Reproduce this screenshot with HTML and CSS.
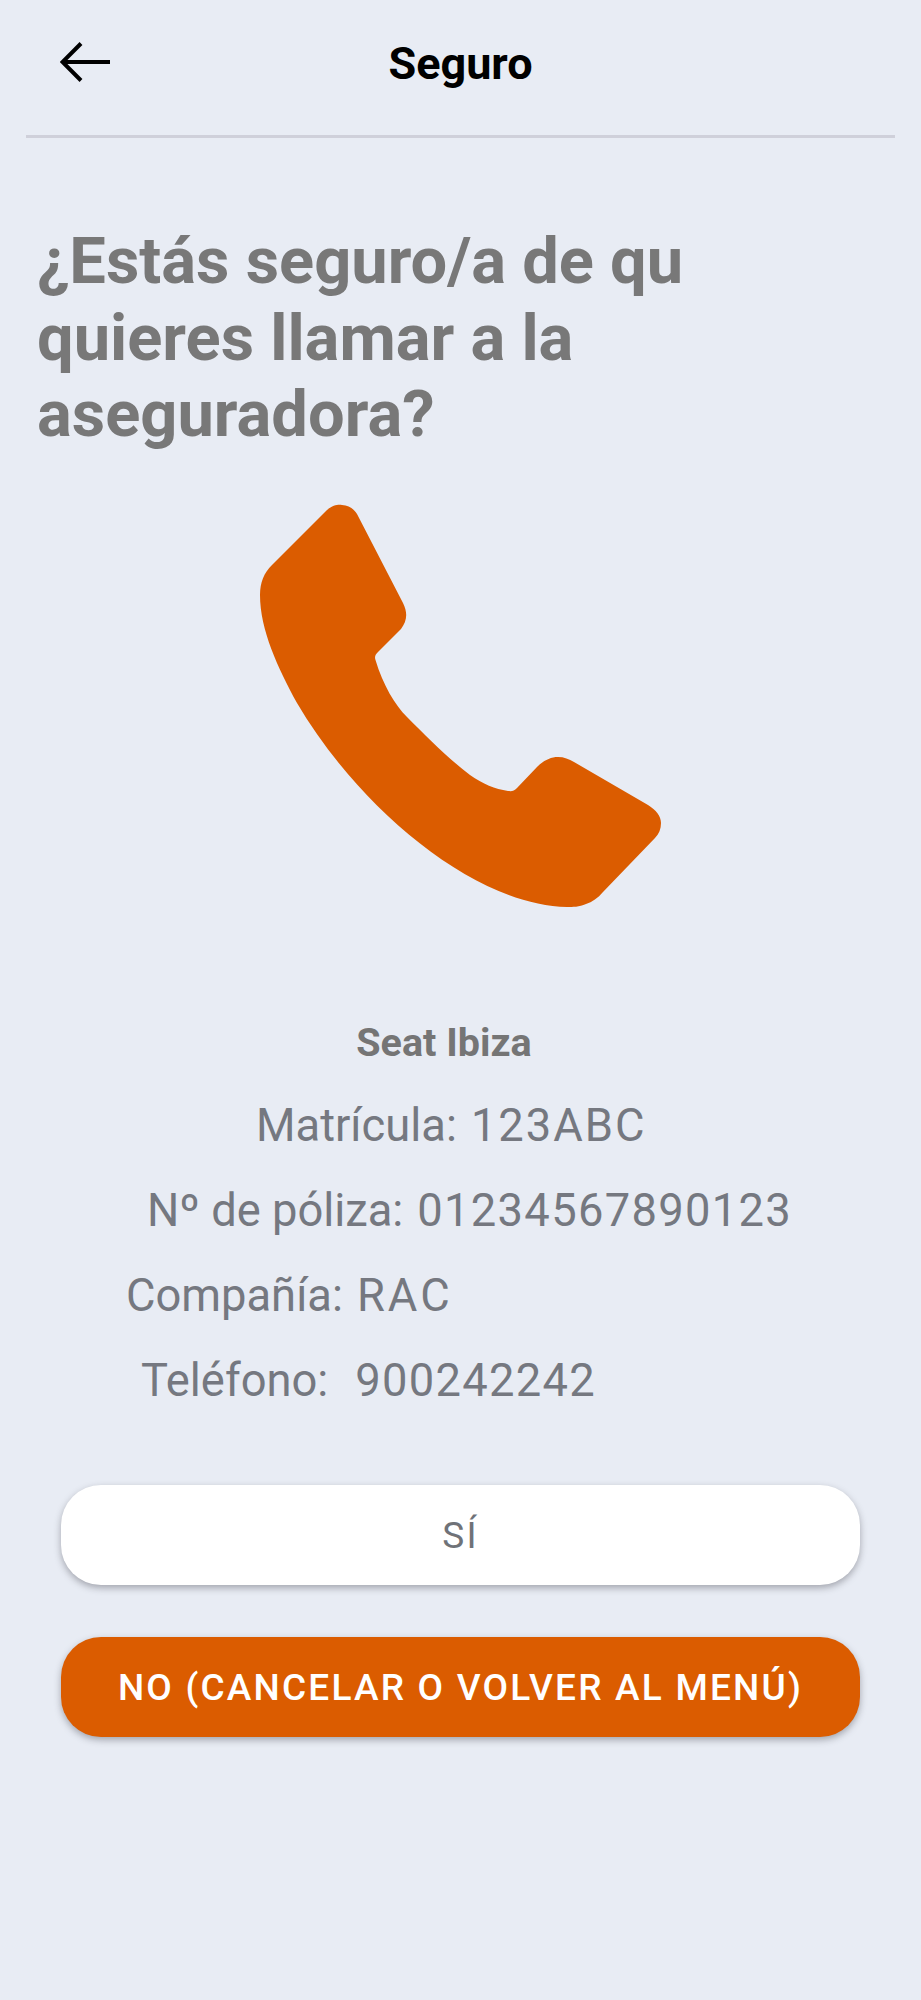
FILE: index.html
```html
<!DOCTYPE html>
<html lang="es">
<head>
<meta charset="utf-8">
<title>Seguro</title>
<link rel="stylesheet" href="styles.css">
</head>
<body>
<main class="screen">
  <header class="topbar">
    <svg class="back" viewBox="0 0 50 40" aria-hidden="true"><path d="M50 20H3M21 1.500 2.500 20 21 38.500"/></svg>
    <h1 class="title">Seguro</h1>
  </header>
  <h2 class="question">
    <span class="q-line clipped">¿Estás seguro/a de qu</span>
    <span class="q-line">quieres llamar a la</span>
    <span class="q-line">aseguradora?</span>
  </h2>
  <div class="phone-wrap">
    <svg class="phone" viewBox="0 0 440 450" aria-hidden="true"><path d="M87 30C93 25 98 24.500 102 25 109 25.500 114 29 117 34L163 123C168 133 167 141 161 149L138 172C135 175 134.500 177 135.500 180 143 205 155 225 167 237 188 258 210 280 230 295 243 304 255 309 268 311 272 311.500 274 311 277 308L297 287C303 281 310 277 318 277 324 277 329 279 334 282L408 325C416 330 421 336 421 343 421 349 419 354 415 358L363 412C358 418 352 422 346 424 339 427 333 427 327 427 235 425 120 330 57 223 38 188 20 150 20 115 20 102 24 93 32 85Z"/></svg>
  </div>
  <section class="details">
    <p class="car">Seat Ibiza</p>
    <p class="row row-plate"><span>Matrícula:</span> <span class="val">123ABC</span></p>
    <p class="row row-policy"><span>Nº de póliza:</span> <span class="val">01234567890123</span></p>
    <p class="row row-company"><span>Compañía:</span> <span class="val">RAC</span></p>
    <p class="row row-tel"><span>Teléfono:</span> <span class="val">900242242</span></p>
  </section>
  <div class="actions">
    <button class="btn btn-yes" type="button">SÍ</button>
    <button class="btn btn-no" type="button">NO (CANCELAR O VOLVER AL MENÚ)</button>
  </div>
</main>
</body>
</html>
```
FILE: styles.css
```css
* { box-sizing: border-box; }
html, body { margin: 0; padding: 0; }
body {
  background: #e8ecf4;
  font-family: Roboto, "Liberation Sans", sans-serif;
}
.screen { width: 921px; height: 2000px; display: flex; flex-direction: column; }
.topbar {
  position: relative;
  height: 138px;
  margin: 0 26px;
  border-bottom: 3px solid #cfd0da;
  display: flex;
  justify-content: center;
  padding-top: 40px;
}
.back {
  position: absolute;
  left: 34px;
  top: 42px;
  width: 50px;
  height: 40px;
  fill: none;
  stroke: #000;
  stroke-width: 4;
}
.title {
  margin: 0;
  font-size: 45px;
  line-height: 48px;
  font-weight: 700;
  color: #000;
}
.question {
  margin: 85px 0 0 37px;
  font-size: 65px;
  line-height: 76.500px;
  font-weight: 700;
  color: #787878;
}
.q-line { display: block; white-space: nowrap; }
.clipped { width: 645px; overflow: hidden; }
.phone-wrap { display: flex; margin: 27.500px 0 0 240px; }
.phone { width: 440px; height: 450px; fill: #db5c00; }
.details { margin-top: 87.500px; color: #757880; }
.details p { margin: 0; }
.car {
  padding-right: 33px;
  text-align: center;
  font-size: 39.500px;
  line-height: 50px;
  font-weight: 700;
  color: #757575;
  margin-bottom: 33.500px !important;
}
.row {
  font-size: 45.300px;
  line-height: 50px;
  margin-bottom: 35px !important;
  display: flex;
  gap: 14px;
}
.val { letter-spacing: 1.300px; }
.row-plate { padding-left: 256px; }
.row-plate .val { letter-spacing: 2px; }
.row-policy { padding-left: 147px; }
.row-company { padding-left: 126px; }
.row-company .val { letter-spacing: 3px; }
.row-tel { padding-left: 141px; gap: 27px; }
.actions {
  margin: 43.500px 61px 0;
  display: flex;
  flex-direction: column;
  gap: 52px;
}
.btn {
  border: 0;
  height: 100px;
  padding-top: 2px;
  border-radius: 40px;
  font-family: inherit;
  font-size: 37px;
  letter-spacing: 2.200px;
  box-shadow: 0 3px 7px rgba(60, 60, 70, .4);
}
.btn-yes { background: #fff; color: #6f7278; }
.btn-no { background: #db5c00; color: #fff; font-weight: 500; }
```
